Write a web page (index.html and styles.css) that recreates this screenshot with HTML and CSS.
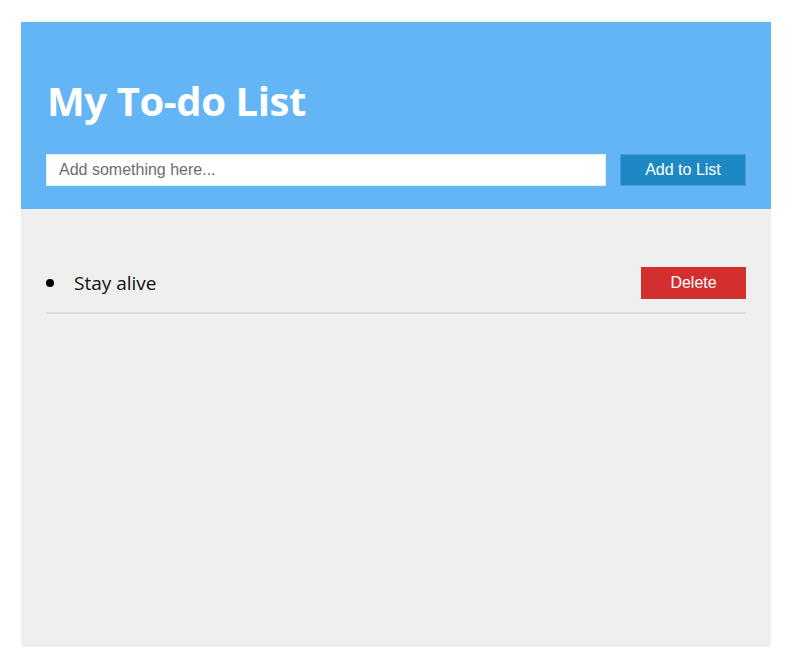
FILE: index.html
```html
<!DOCTYPE html>
<html>
<head>
<meta charset="utf-8">
<link rel="stylesheet" href="styles.css">
</head>
<body>
<div class="app">
  <header class="header">
    <h1 class="title">My To-do List</h1>
    <div class="add-row">
      <input class="add-input" type="text" placeholder="Add something here...">
      <button class="add-btn">Add to List</button>
    </div>
  </header>
  <main class="content">
    <ul class="todo-list">
      <li class="todo-item">
        <span class="todo-text">Stay alive</span>
        <button class="delete-btn">Delete</button>
      </li>
    </ul>
  </main>
</div>
</body>
</html>
```
FILE: styles.css
```css
html, body {
  margin: 0;
  padding: 0;
  background: #ffffff;
}
body {
  padding: 22px 23px 23px 21px;
  font-family: "Open Sans", "Noto Sans", sans-serif;
}
.app {
  width: 750px;
  height: 625px;
  background: #efefef;
  display: flex;
  flex-direction: column;
}
.header {
  background: #64b5f6;
  padding: 49px 25px 23px 25px;
}
.title {
  margin: 0 0 23px 1px;
  color: #ffffff;
  font-size: 40px;
  font-weight: 700;
  line-height: 60px;
  letter-spacing: -0.4px;
}
.add-row {
  display: flex;
  gap: 14px;
}
.add-input {
  box-sizing: border-box;
  width: 560px;
  height: 32px;
  border: 1px solid #e3f1fd;
  background: #ffffff;
  padding: 0 12px;
  font-family: "Liberation Sans", Arial, sans-serif;
  font-size: 16px;
  color: #333;
  outline: none;
}
.add-input::placeholder {
  color: #6d6d6d;
}
.add-btn {
  box-sizing: border-box;
  width: 126px;
  height: 32px;
  background: #1e88c5;
  border: 1px solid #4a98e8;
  color: #ffffff;
  font-family: "Liberation Sans", Arial, sans-serif;
  font-size: 16px;
  padding: 0;
}
.content {
  padding: 45px 25px 0 25px;
}
.todo-list {
  list-style: none;
  margin: 0;
  padding: 0;
}
.todo-item {
  display: flex;
  align-items: center;
  justify-content: space-between;
  padding: 13px 0 13px 0;
  border-bottom: 2px solid #dddddd;
}
.todo-text {
  display: flex;
  align-items: center;
  font-size: 19px;
  color: #111111;
}
.todo-text::before {
  content: "";
  width: 8px;
  height: 8px;
  border-radius: 50%;
  background: #000000;
  margin: 0 20px 0 0;
}
.delete-btn {
  box-sizing: border-box;
  width: 105px;
  height: 32px;
  background: #d32f2f;
  border: none;
  color: #ffffff;
  font-family: "Liberation Sans", Arial, sans-serif;
  font-size: 16px;
  padding: 0;
}
```
